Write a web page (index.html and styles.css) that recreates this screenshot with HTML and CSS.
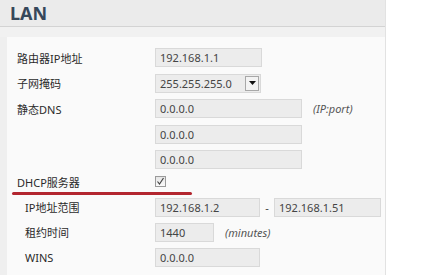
FILE: index.html
```html
<!DOCTYPE html>
<html lang="zh-CN">
<head>
  <meta charset="UTF-8" />
  <title>LAN</title>
  <link rel="stylesheet" href="styles.css">
</head>
<body>
  <div class="page">
    <div class="header"><h2>LAN</h2></div>
    <div class="strip"></div>
    <div class="panel">
      <div class="row">
        <label>路由器IP地址</label>
        <div class="field w107">192.168.1.1</div>
      </div>
      <div class="row">
        <label>子网掩码</label>
        <div class="select">
          <span>255.255.255.0</span>
          <span class="arrow"><svg width="7" height="4" viewBox="0 0 7 4"><path d="M0 0h7L3.5 4z" fill="#111"/></svg></span>
        </div>
      </div>
      <div class="row">
        <label>静态DNS</label>
        <div class="field w147">0.0.0.0</div>
        <span class="hint">(IP:port)</span>
      </div>
      <div class="row">
        <label></label>
        <div class="field w147">0.0.0.0</div>
      </div>
      <div class="row">
        <label></label>
        <div class="field w147">0.0.0.0</div>
      </div>
      <div class="row check-row">
        <label>DHCP服务器</label>
        <span class="checkbox"><svg width="9" height="9" viewBox="0 0 9 9"><path d="M1.5 4.5l2 2.5 4-6" fill="none" stroke="#444" stroke-width="1.2"/></svg></span>
      </div>
      <div class="red-line"></div>
      <div class="row sub">
        <label>IP地址范围</label>
        <div class="field w105">192.168.1.2</div>
        <span class="dash">-</span>
        <div class="field w107">192.168.1.51</div>
      </div>
      <div class="row sub">
        <label>租约时间</label>
        <div class="field w59">1440</div>
        <span class="hint">(minutes)</span>
      </div>
      <div class="row sub">
        <label>WINS</label>
        <div class="field w105">0.0.0.0</div>
      </div>
    </div>
  </div>
</body>
</html>
```

FILE: styles.css
```css
body {
  margin: 0;
  background: #fff;
  font-family: "Noto Sans", "Noto Sans CJK SC", sans-serif;
  font-size: 11px;
  color: #333;
}
.page {
  width: 385px;
  height: 275px;
  background: #efefef;
  border-right: 1px solid #e2e2e2;
  overflow: hidden;
}
.header {
  height: 26px;
  background: #ebebeb;
  border-bottom: 1px solid #d3d3d3;
}
.header h2 {
  margin: 0;
  padding: 1px 0 0 10px;
  font-size: 18px;
  line-height: 24px;
  font-weight: bold;
  color: #36475a;
}
.strip {
  height: 10px;
  background: #f1f1f1;
}
.panel {
  margin-left: 7px;
  padding-top: 8px;
  height: 240px;
  background: #fafafa;
}
.row {
  display: flex;
  align-items: center;
  height: 25.5px;
}
.row label {
  width: 148px;
  padding-left: 10px;
  box-sizing: border-box;
  color: #2a2a2a;
}
.row.sub {
  height: 25px;
}
.row.sub label {
  padding-left: 18px;
}
.field {
  height: 19px;
  line-height: 18px;
  box-sizing: border-box;
  padding-left: 4px;
  background: #ececec;
  border: 1px solid #d9d9d9;
  color: #444;
}
.w59 { width: 59px; }
.w105 { width: 105px; }
.w107 { width: 107px; }
.w147 { width: 147px; }
.select {
  display: flex;
  align-items: center;
  justify-content: space-between;
  width: 106px;
  height: 19px;
  box-sizing: border-box;
  padding: 0 1px 0 4px;
  background: #ececec;
  border: 1px solid #d9d9d9;
  color: #444;
}
.arrow {
  display: flex;
  align-items: center;
  justify-content: center;
  width: 14px;
  height: 15px;
  box-sizing: border-box;
  border: 1px solid #a8a8a8;
  background: #f3f3f3;
}
.hint {
  margin-left: 11px;
  font-style: italic;
  color: #555;
}
.dash {
  width: 14px;
  text-align: center;
  color: #444;
}
.check-row {
  height: 18px;
}
.checkbox {
  display: flex;
  align-items: center;
  justify-content: center;
  width: 11px;
  height: 11px;
  box-sizing: border-box;
  border: 1px solid #9a9a9a;
  background: linear-gradient(#e6e6e6, #fafafa);
}
.red-line {
  width: 180px;
  height: 3px;
  margin: 1px 0 0 5px;
  border-radius: 2px;
  background: #b3262f;
}
```
